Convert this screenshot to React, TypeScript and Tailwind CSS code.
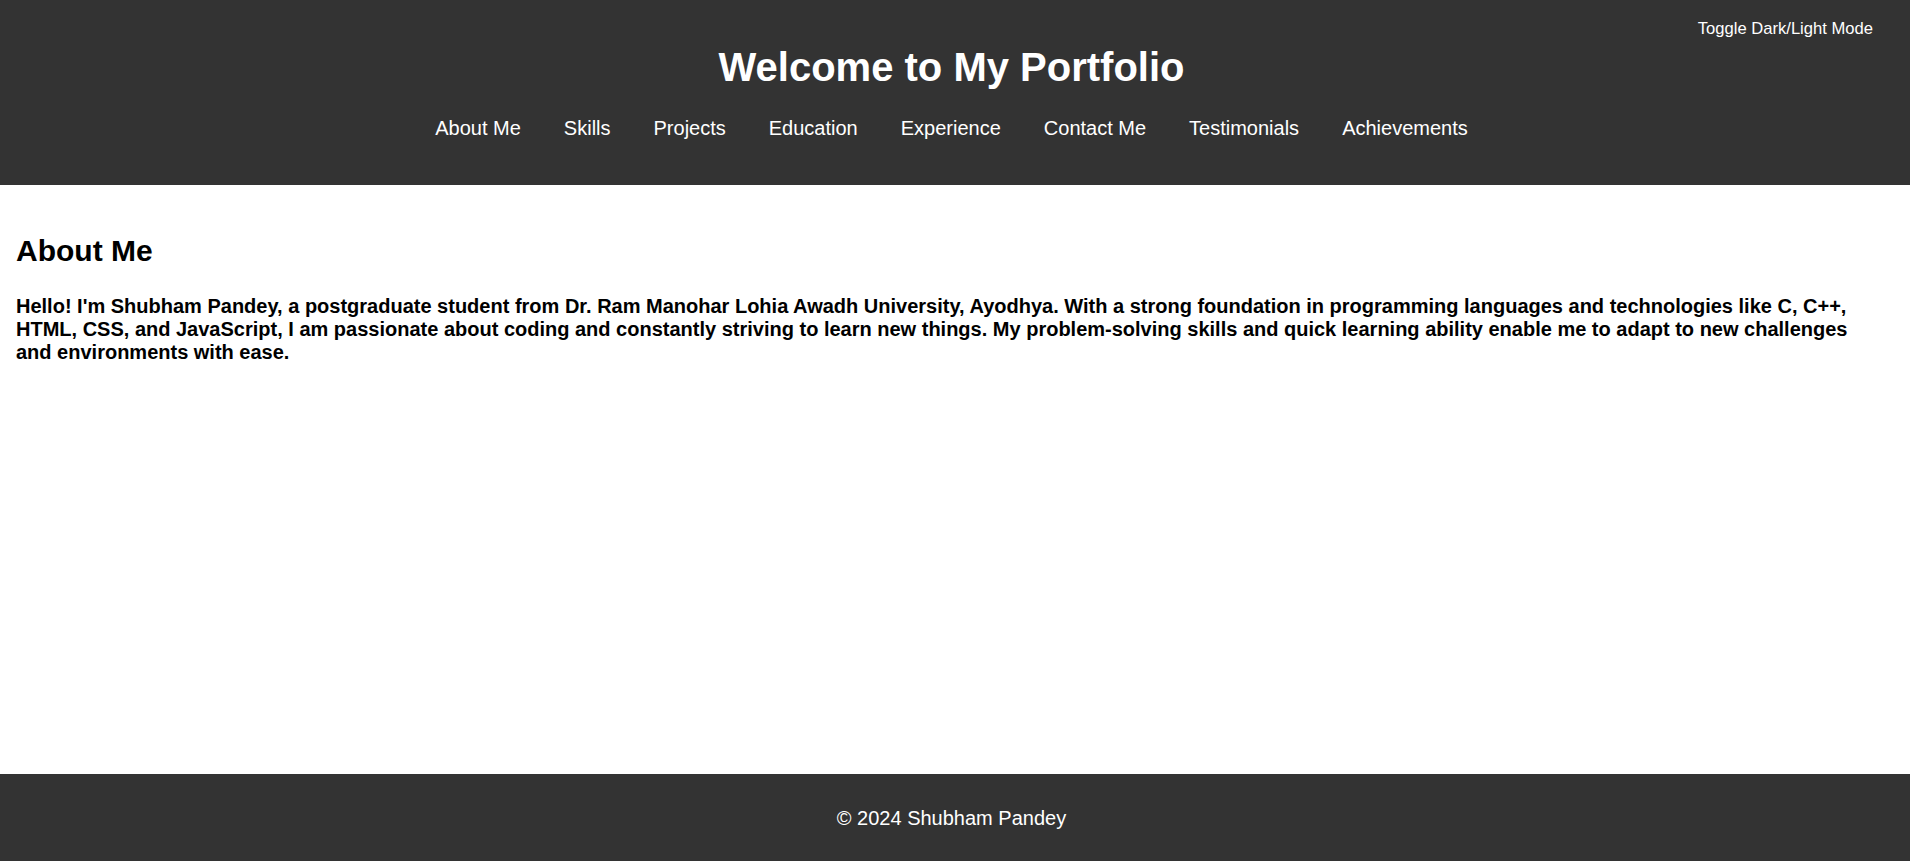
const navItems = [
  "About Me",
  "Skills",
  "Projects",
  "Education",
  "Experience",
  "Contact Me",
  "Testimonials",
  "Achievements",
];

const App = () => {
  return (
    <div className="min-h-screen flex flex-col bg-white font-['Liberation_Sans',Arial,sans-serif]">
      {/* Header */}
      <header className="relative bg-[#333333] text-white pt-[44px] pb-[45px] pr-[7px] flex flex-col items-center">
        <button className="absolute top-[10px] right-[27px] px-[10px] pt-[9px] pb-[8px] text-[16.6px] leading-[19px] text-white bg-transparent">
          Toggle Dark/Light Mode
        </button>

        <h1 className="text-[40px] leading-[46px] font-bold">
          Welcome to My Portfolio
        </h1>

        <nav className="mt-[27px]">
          <ul className="flex items-center gap-[43px] text-[20px] leading-[23px]">
            {navItems.map((item) => (
              <li key={item}>
                <a href="#" className="text-white">
                  {item}
                </a>
              </li>
            ))}
          </ul>
        </nav>
      </header>

      {/* About section */}
      <main className="flex-1 pt-[49px] pl-4 pr-[23px] text-black">
        <section>
          <h2 className="text-[30px] leading-[34.5px] font-bold mb-[26px]">About Me</h2>
          <p className="text-[20px] font-bold leading-[23px]">
            Hello! I'm Shubham Pandey, a postgraduate student from Dr. Ram
            Manohar Lohia Awadh University, Ayodhya. With a strong foundation in
            programming languages and technologies like C, C++, HTML, CSS, and
            JavaScript, I am passionate about coding and constantly striving to
            learn new things. My problem-solving skills and quick learning
            ability enable me to adapt to new challenges and environments with
            ease.
          </p>
        </section>
      </main>

      {/* Footer */}
      <footer className="bg-[#333333] text-white pt-[33px] pb-[31px] pr-[7px] text-center text-[20px] leading-[23px]">
        © 2024 Shubham Pandey
      </footer>
    </div>
  );
};

export default App;
